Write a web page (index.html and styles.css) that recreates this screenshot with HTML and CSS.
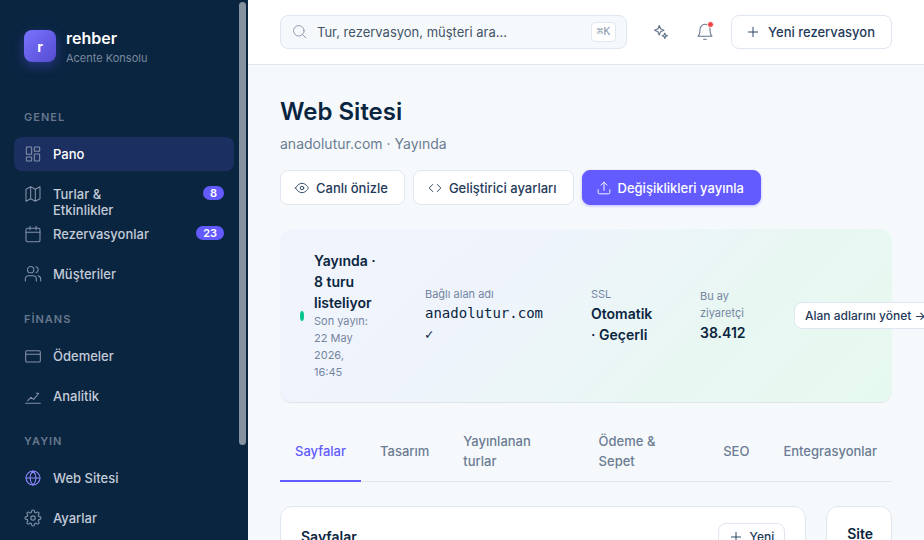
FILE: index.html
```html
<!DOCTYPE html>
<html lang="tr">
  <head>
    <meta charset="UTF-8" />
    <meta name="viewport" content="width=device-width, initial-scale=1.0" />
    <title>rehber – Web Sitesi</title>
    <link rel="stylesheet" href="styles.css">
  </head>
  <body>
    <div class="app">
      <aside class="sidebar">
        <div class="brand">
          <div class="brand-logo">r</div>
          <div>
            <div class="brand-name">rehber</div>
            <div class="brand-sub">Acente Konsolu</div>
          </div>
        </div>

        <nav>
          <div class="nav-label">GENEL</div>
          <div class="nav-group">
            <a href="#" class="nav-item active">
              <svg class="icon" viewBox="0 0 24 24"><rect x="2" y="1.500" width="8" height="11" rx="1" /><rect x="14" y="1.500" width="8" height="6.500" rx="1" /><rect x="14" y="12" width="8" height="10.500" rx="1" /><rect x="2" y="16.500" width="8" height="6" rx="1" /></svg>
              <span>Pano</span>
            </a>
            <a href="#" class="nav-item">
              <svg class="icon" viewBox="0 0 24 24"><path d="M1.500 5v18l7-4 7 4 7-4V1l-7 4-7-4-7 4zM8.500 1v18M15.500 5v18" /></svg>
              <span>Turlar &amp;<br />Etkinlikler</span>
              <span class="badge">8</span>
            </a>
            <a href="#" class="nav-item">
              <svg class="icon" viewBox="0 0 24 24"><rect x="1.500" y="3.500" width="21" height="20" rx="2" /><path d="M1.500 9.500h21M7.500 0.500v5M16.500 0.500v5" /></svg>
              <span>Rezervasyonlar</span>
              <span class="badge">23</span>
            </a>
            <a href="#" class="nav-item">
              <svg class="icon" viewBox="0 0 24 24"><path d="M17 22.500v-3a5 5 0 0 0-5-5H5.500a5 5 0 0 0-5 5v3M23.500 22.500v-3a5 5 0 0 0-4-4.800M16.500 1a4.700 4.700 0 0 1 0 9" /><circle cx="8.500" cy="5.500" r="4.700" /></svg>
              <span>Müşteriler</span>
            </a>
          </div>

          <div class="nav-label">FİNANS</div>
          <div class="nav-group">
            <a href="#" class="nav-item">
              <svg class="icon" viewBox="0 0 24 24"><rect x="1" y="4" width="22" height="17" rx="2" /><path d="M1 9.500h22" /></svg>
              <span>Ödemeler</span>
            </a>
            <a href="#" class="nav-item">
              <svg class="icon" viewBox="0 0 24 24"><path d="M1 23h22M4 19l5-5 4 3 7-8M17 8h3.500" /></svg>
              <span>Analitik</span>
            </a>
          </div>

          <div class="nav-label">YAYIN</div>
          <div class="nav-group">
            <a href="#" class="nav-item current">
              <svg class="icon" viewBox="0 0 24 24"><circle cx="12" cy="12" r="10.500" /><path d="M1.500 12h21M12 1.500a15.300 15.300 0 0 1 4.500 10.500 15.300 15.300 0 0 1-4.500 10.500 15.300 15.300 0 0 1-4.500-10.500 15.300 15.300 0 0 1 4.500-10.500z" /></svg>
              <span>Web Sitesi</span>
            </a>
            <a href="#" class="nav-item">
              <svg class="icon" viewBox="1 1 22 22"><circle cx="12" cy="12" r="3" /><path d="M19.400 15a1.650 1.650 0 0 0 .33 1.820l.06.06a2 2 0 1 1-2.830 2.830l-.06-.06a1.650 1.650 0 0 0-2.820 1.170V21a2 2 0 0 1-4 0v-.09a1.650 1.650 0 0 0-2.900-1.260l-.06.06a2 2 0 1 1-2.830-2.830l.06-.06A1.650 1.650 0 0 0 3.170 14H3a2 2 0 0 1 0-4h.09a1.650 1.650 0 0 0 1.260-2.820l-.06-.06a2 2 0 1 1 2.830-2.830l.06.06A1.650 1.650 0 0 0 10 3.170V3a2 2 0 0 1 4 0v.09a1.650 1.650 0 0 0 2.820 1.260l.06-.06a2 2 0 1 1 2.830 2.830l-.06.06A1.650 1.650 0 0 0 20.830 10H21a2 2 0 0 1 0 4h-.09a1.650 1.650 0 0 0-1.510 1z" /></svg>
              <span>Ayarlar</span>
            </a>
          </div>
        </nav>
        <div class="scroll-thumb"></div>
      </aside>

      <main class="main">
        <header class="topbar">
          <label class="search">
            <svg class="icon" viewBox="0 0 24 24"><circle cx="10" cy="10" r="9" /><path d="M22 22l-5.500-5.500" /></svg>
            <input type="text" aria-label="Ara" placeholder="Tur, rezervasyon, müşteri ara…" />
            <kbd>⌘K</kbd>
          </label>
          <button type="button" class="icon-btn" aria-label="Asistan">
            <svg class="icon spark" viewBox="0 0 24 24"><path d="M9 1l2.200 5.300L17 9l-5.800 2.700L9 17l-2.200-5.300L1 9l5.800-2.700zM18.500 14l1.300 3.200L23 18.500l-3.200 1.300-1.300 3.200-1.300-3.200-3.200-1.300 3.200-1.300z" /></svg>
          </button>
          <button type="button" class="icon-btn" aria-label="Bildirimler">
            <svg class="icon" viewBox="0 0 24 24"><path d="M19.500 8a7.500 7.500 0 0 0-15 0c0 8-3 10.500-3 10.500h21s-3-2.500-3-10.500M10 23h4" /></svg>
            <span class="dot-red"></span>
          </button>
          <button type="button" class="btn new-btn">
            <svg class="icon" viewBox="0 0 24 24"><path d="M12 4v16M4 12h16" /></svg>
            Yeni rezervasyon
          </button>
        </header>

        <div class="content">
          <h1>Web Sitesi</h1>
          <p class="subtitle">anadolutur.com · Yayında</p>

          <div class="actions">
            <button type="button" class="btn">
              <svg class="icon" viewBox="0 0 24 24"><path d="M1 12s4-8 11-8 11 8 11 8-4 8-11 8-11-8-11-8z" /><circle cx="12" cy="12" r="3" /></svg>
              Canlı önizle
            </button>
            <button type="button" class="btn">
              <svg class="icon" viewBox="0 0 24 24"><path d="M16 18l6-6-6-6M8 6l-6 6 6 6" /></svg>
              Geliştirici ayarları
            </button>
            <button type="button" class="btn primary">
              <svg class="icon" viewBox="0 0 24 24"><path d="M2 15v5a2 2 0 0 0 2 2h16a2 2 0 0 0 2-2v-5M17 7l-5-5-5 5M12 2v14" /></svg>
              Değişiklikleri yayınla
            </button>
          </div>

          <section class="status">
            <div class="live">
              <span class="live-dot"></span>
              <div>
                <div class="value">Yayında ·<br />8 turu listeliyor</div>
                <div class="caption">Son yayın:<br />22 May<br />2026,<br />16:45</div>
              </div>
            </div>
            <div>
              <div class="caption">Bağlı alan adı</div>
              <div class="value mono">anadolutur.com ✓</div>
            </div>
            <div>
              <div class="caption">SSL</div>
              <div class="value">Otomatik · Geçerli</div>
            </div>
            <div>
              <div class="caption">Bu ay ziyaretçi</div>
              <div class="value">38.412</div>
            </div>
            <button type="button" class="btn small">Alan adlarını yönet →</button>
          </section>

          <div class="tabs">
            <button type="button" class="tab active">Sayfalar</button>
            <button type="button" class="tab">Tasarım</button>
            <button type="button" class="tab two-line">Yayınlanan<br />turlar</button>
            <button type="button" class="tab two-line">Ödeme &amp;<br />Sepet</button>
            <button type="button" class="tab">SEO</button>
            <button type="button" class="tab">Entegrasyonlar</button>
          </div>

          <div class="panels">
            <section class="card">
              <div class="card-head">
                <h2>Sayfalar</h2>
                <button type="button" class="btn small">
                  <svg class="icon" viewBox="0 0 24 24"><path d="M12 4v16M4 12h16" /></svg>
                  Yeni
                </button>
              </div>
            </section>
            <section class="card">
              <div class="card-head">
                <h2>Site</h2>
              </div>
            </section>
          </div>
        </div>
      </main>
    </div>
  </body>
</html>
```
FILE: styles.css
```css
* {
  box-sizing: border-box;
}
body {
  margin: 0;
  font-family: Inter, "Liberation Sans", sans-serif;
  font-size: 14px;
  line-height: 21px;
  color: #0a2540;
  background: #f6f9fc;
}
h1,
h2,
p {
  margin: 0;
}
button,
input {
  font-family: inherit;
}
.icon {
  width: 16px;
  height: 16px;
  flex-shrink: 0;
  fill: none;
  stroke: currentColor;
  stroke-width: 1.6;
  stroke-linecap: round;
  stroke-linejoin: round;
  overflow: visible;
}
.app {
  display: flex;
  height: 100vh;
  overflow: hidden;
}

/* sidebar */
.sidebar {
  position: relative;
  width: 248px;
  flex-shrink: 0;
  padding: 28px 14px;
  background: #0a2540;
  overflow: hidden;
}
.scroll-thumb {
  position: absolute;
  top: 2px;
  right: 2px;
  width: 7px;
  height: 82%;
  border-radius: 4px;
  background: #8592a0;
}
.brand {
  display: flex;
  align-items: flex-start;
  gap: 10px;
  padding: 0 10px 21px;
}
.brand-logo {
  display: flex;
  align-items: center;
  justify-content: center;
  width: 32px;
  height: 32px;
  margin-top: 2px;
  border-radius: 8px;
  color: #fff;
  font-weight: 700;
  background: linear-gradient(135deg, #7a73ff, #544bd0);
  box-shadow: 0 4px 12px rgba(99, 91, 255, 0.35);
}
.brand-name {
  font-size: 16px;
  font-weight: 600;
  line-height: 20px;
  color: #fff;
}
.brand-sub {
  font-size: 11px;
  line-height: 20px;
  color: #7b8a9d;
}
.nav-label {
  padding: 20px 10px 12px;
  font-size: 11px;
  font-weight: 600;
  line-height: 16px;
  letter-spacing: 1px;
  color: #66778d;
}
.nav-group {
  display: flex;
  flex-direction: column;
  gap: 6px;
}
.nav-item {
  display: flex;
  align-items: flex-start;
  gap: 12px;
  height: 34px;
  padding: 9px 10px;
  border-radius: 8px;
  font-size: 13px;
  font-weight: 500;
  line-height: 16px;
  color: #c3cbd8;
  text-decoration: none;
}
.nav-item .icon {
  margin-left: 1px;
  color: #8291a6;
}
.nav-item.active {
  color: #fff;
  background: #1b2f60;
}
.nav-item.current .icon {
  color: #8f88ff;
}
.badge {
  margin-left: auto;
  padding: 0 7px;
  border-radius: 8px;
  font-size: 11px;
  font-weight: 600;
  line-height: 14px;
  color: #fff;
  background: #635bff;
}

/* top bar */
.main {
  flex: 1;
  min-width: 0;
  overflow: hidden;
}
.topbar {
  display: flex;
  align-items: center;
  gap: 8px;
  height: 65px;
  padding: 0 32px;
  background: #fff;
  border-bottom: 1px solid #e3e8ee;
}
.search {
  display: flex;
  align-items: center;
  flex: 1;
  min-width: 0;
  height: 34px;
  margin-right: 8px;
  padding: 0 10px 0 12px;
  border: 1px solid #e0e6ef;
  border-radius: 8px;
  background: #f6f9fc;
}
.search .icon {
  width: 14px;
  height: 14px;
  color: #8898aa;
}
.search input {
  flex: 1;
  min-width: 0;
  padding: 0 10px;
  border: none;
  outline: none;
  background: none;
  font-size: 13px;
}
.search input::placeholder {
  color: #425466;
}
.search kbd {
  padding: 0 5px;
  border: 1px solid #e3e8ee;
  border-radius: 4px;
  font-family: "DejaVu Sans Mono", monospace;
  font-size: 11px;
  line-height: 18px;
  color: #8898aa;
  background: #fff;
}
.icon-btn {
  position: relative;
  display: flex;
  align-items: center;
  justify-content: center;
  width: 36px;
  height: 36px;
  padding: 0;
  border: none;
  border-radius: 8px;
  background: none;
  color: #64748b;
  cursor: pointer;
}
.icon-btn .spark {
  width: 14px;
  height: 14px;
  stroke-width: 2;
}
.dot-red {
  position: absolute;
  top: 7px;
  right: 9px;
  width: 7px;
  height: 7px;
  border: 1px solid #fff;
  border-radius: 50%;
  background: #ef4444;
}

/* buttons */
.btn {
  display: inline-flex;
  align-items: center;
  gap: 7px;
  height: 35px;
  padding: 0 16px 0 14px;
  border: 1px solid #e0e6ef;
  border-radius: 8px;
  background: #fff;
  color: #1f3a5a;
  font-size: 13px;
  font-weight: 500;
  line-height: 20px;
  white-space: nowrap;
  cursor: pointer;
}
.btn .icon {
  width: 14px;
  height: 14px;
}
.btn.primary {
  border-color: #635bff;
  background: #635bff;
  color: #fff;
  box-shadow: 0 1px 3px rgba(99, 91, 255, 0.4);
}
.btn.small {
  height: 27px;
  padding: 0 10px;
  font-size: 12px;
}
.btn.new-btn {
  gap: 8px;
  height: 34px;
}

/* page */
.content {
  padding: 32px;
}
h1 {
  font-size: 24px;
  font-weight: 600;
  line-height: 30px;
}
.subtitle {
  margin-top: 6px;
  color: #6b7c93;
}
.actions {
  display: flex;
  gap: 8px;
  margin: 16px 0 24px;
}
.status {
  display: grid;
  grid-template-columns: 81fr 122fr 65fr 50fr 78px;
  gap: 44px;
  align-items: center;
  padding: 21px 20px;
  border-radius: 12px;
  background: linear-gradient(135deg, #f1f4fd 0%, #eff4fc 35%, #e8f7f2 70%, #e6f9f0 100%);
  box-shadow: 0 1px 1px rgba(10, 37, 64, 0.1);
}
.status .btn {
  width: max-content;
}
.live {
  display: flex;
  align-items: center;
  gap: 10px;
}
.live-dot {
  width: 4px;
  height: 10px;
  flex-shrink: 0;
  border-radius: 50%;
  background: #00c48c;
}
.value {
  font-weight: 600;
}
.mono {
  font-family: "DejaVu Sans Mono", monospace;
  font-weight: 400;
}
.caption {
  font-size: 11px;
  line-height: 17px;
  color: #7485a0;
}
.tabs {
  display: flex;
  gap: 4px;
  margin-top: 20px;
  border-bottom: 1px solid #e3e8ee;
}
.tab {
  margin-bottom: -1px;
  padding: 9px 15px;
  border: none;
  border-bottom: 2px solid transparent;
  background: none;
  color: #6b7c93;
  font-size: 13px;
  font-weight: 500;
  line-height: 20px;
  text-align: left;
  cursor: pointer;
}
.tab.two-line {
  flex-grow: 1;
}
.tab.active {
  color: #635bff;
  border-bottom-color: #635bff;
}
.panels {
  display: grid;
  grid-template-columns: 8fr 1fr;
  gap: 20px;
  margin-top: 24px;
}
.card {
  min-width: 0;
  min-height: 320px;
  border: 1px solid #e0e6ef;
  border-radius: 12px;
  background: #fff;
}
.card-head {
  display: flex;
  align-items: center;
  justify-content: space-between;
  padding: 16px 20px;
}
h2 {
  font-size: 14px;
  font-weight: 600;
  line-height: 21px;
}
```
